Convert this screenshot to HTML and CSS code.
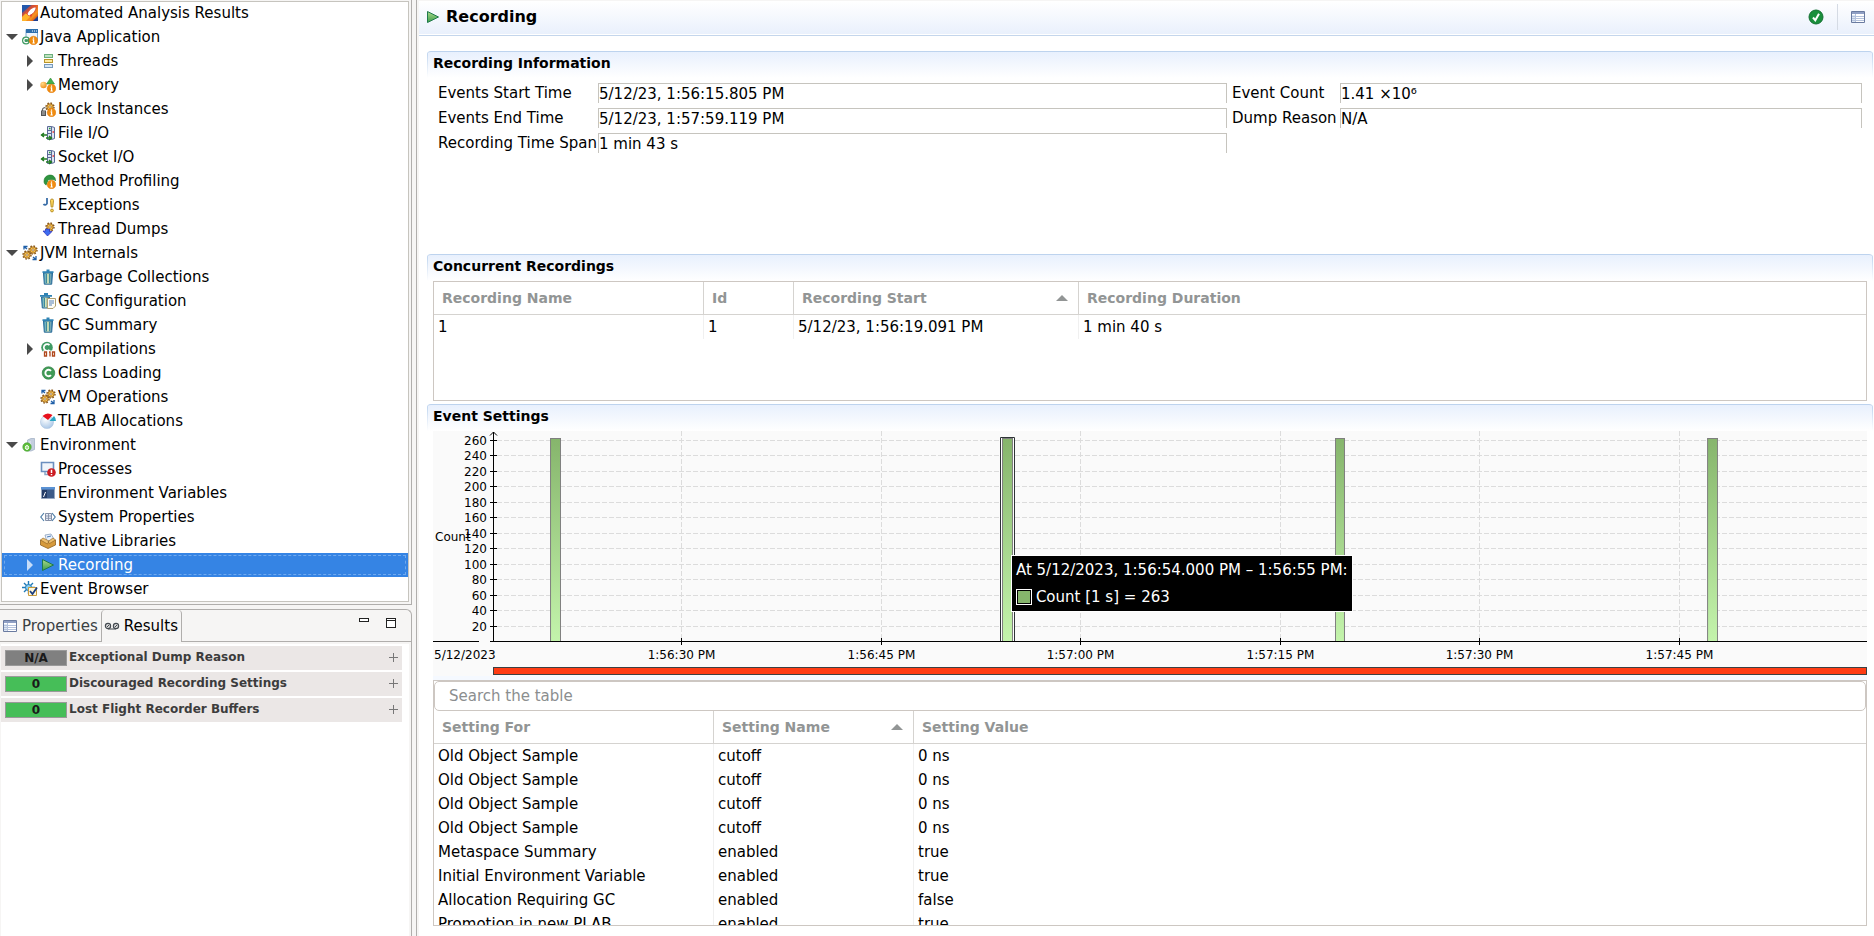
FILE: index.html
```html
<!DOCTYPE html>
<html lang="en">
<head>
<meta charset="utf-8">
<title>Recording</title>
<link rel="stylesheet" href="styles.css">
</head>
<body>
<svg class="sprite" aria-hidden="true">
  <defs>
    <linearGradient id="g-rocket" x1="0" y1="0" x2="1" y2="1"><stop offset="0" stop-color="#1f4fa8"/><stop offset=".4" stop-color="#e0502e"/><stop offset=".7" stop-color="#f7941e"/><stop offset="1" stop-color="#b3201c"/></linearGradient>
    <linearGradient id="g-can" x1="0" x2="1" y1="0" y2="0"><stop offset="0" stop-color="#2f8fc0"/><stop offset=".5" stop-color="#d5e3b4"/><stop offset="1" stop-color="#2a78b0"/></linearGradient>
    <linearGradient id="g-play" x1="0" y1="0" x2="0" y2="1"><stop offset="0" stop-color="#a9d98a"/><stop offset="1" stop-color="#3f9e4b"/></linearGradient>
    <linearGradient id="g-bar" x1="0" y1="0" x2="0" y2="1"><stop offset="0" stop-color="#86b56c"/><stop offset="1" stop-color="#c4f4ac"/></linearGradient>
    <radialGradient id="g-ball" cx=".35" cy=".3" r=".8"><stop offset="0" stop-color="#ffd98a"/><stop offset="1" stop-color="#f08a10"/></radialGradient>
    <radialGradient id="g-pie" cx=".4" cy=".3" r=".8"><stop offset="0" stop-color="#ffffff"/><stop offset="1" stop-color="#9fc0e4"/></radialGradient>
  </defs>
  <symbol id="info" viewBox="0 0 16 16"><circle cx="11.5" cy="11.5" r="4.3" fill="#f08c10" stroke="#e07404" stroke-width=".5"/><path d="M11.5 8.600v1.200M10.600 10.900h1v3M10.400 14h2.400" stroke="#fff" stroke-width="1.200" fill="none"/></symbol>
  <symbol id="gear" viewBox="0 0 10 10"><circle cx="5" cy="5" r="4" fill="none" stroke="#8a5614" stroke-width="1.400" stroke-dasharray="1.600 1.540"/><circle cx="5" cy="5" r="3.200" fill="#fbc24a" stroke="#8a5614" stroke-width=".8"/><circle cx="5" cy="5" r="1.200" fill="#fff" stroke="#8a5614" stroke-width=".7"/></symbol>
  <symbol id="rocket" viewBox="0 0 16 16"><path fill="url(#g-rocket)" d="M0 0h16v16H0z"/><path d="M0 0h9L0 8z" fill="#2458ac"/><path d="M0 12l5-5 4 4-5 5H0z" fill="#ffb52a"/><path d="M14 2C10 2 7 5 5 9l2 2c4-2 7-5 7-9z" fill="#fff" stroke="#c43" stroke-width=".7"/><path d="M6 7L3 8l2 1zM8 10l1 3 1-4z" fill="#e3352b"/><path d="M11 16h5v-5z" fill="#1d3f92"/></symbol>
  <symbol id="javaapp" viewBox="0 0 16 16"><path d="M4 .5h11.500v11H4z" fill="#eef6fd" stroke="#7fa8cc"/><path d="M4 0h12v4H4z" fill="#2d6fad"/><path d="M10 2h1M12 2h1M14 2h1" stroke="#fff"/><circle cx="4" cy="11.500" r="4" fill="#3f9a63"/><path d="M5.800 10.200a2.200 2.200 0 1 0 0 2.600" stroke="#fff" stroke-width="1.300" fill="none"/><use href="#info" width="16" height="16"/></symbol>
  <symbol id="threads" viewBox="0 0 16 16"><rect x="4.500" y="1.500" width="8" height="3" fill="#bfe3c0" stroke="#6cae7c"/><rect x="4.500" y="6.500" width="8" height="3" fill="#ffe9a0" stroke="#b8952c"/><rect x="4.500" y="11.500" width="8" height="3" fill="#d4e6f8" stroke="#7799bb"/></symbol>
  <symbol id="memory" viewBox="0 0 16 16"><circle cx="3.500" cy="8" r="3.200" fill="url(#g-ball)"/><path d="M10.500 1l4 6h-8z" fill="#45b04c" stroke="#2e8c38" stroke-width=".6"/><use href="#info" width="16" height="16"/></symbol>
  <symbol id="lock" viewBox="0 0 16 16"><use href="#gear" x="5" y="1" width="10" height="10"/><path d="M2.500 10V8.500a2 2 0 0 1 3-1.500" fill="none" stroke="#666" stroke-width="1.200"/><path d="M1 9.500h5V15H1z" fill="#555"/><path d="M2 11h3M2 13h3" stroke="#ddd" stroke-width=".8"/><use href="#info" width="16" height="16"/></symbol>
  <symbol id="io" viewBox="0 0 16 16"><path d="M7.500 1.500h4l3 1v11l-3 1h-4z" fill="#dfe5f3" stroke="#5a6a96"/><path d="M11.500 1.500v13M8 5.500h3.500M8 8.500h3.500" stroke="#5a6a96"/><path d="M9 3.500h1.500" stroke="#2a9a3c" stroke-width="1.400"/><path d="M12.500 7h1.500" stroke="#e33" stroke-width="1.400"/><path d="M1 10h6M4 8l-2.500 2L4 12M6 13h5M9 11l2.500 2L9 15" fill="none" stroke="#1f7a1f" stroke-width="1.400"/></symbol>
  <symbol id="method" viewBox="0 0 16 16"><path d="M4 8.500C4 0 16 0 15.500 8l-1.500-1.500H9L6.500 12C5 12 4 10 4 8.500z" fill="#2f9440" stroke="#1c7a2c" stroke-width=".6"/><path d="M6.500 12l2-5h3l-3 5z" fill="#cfeacf"/><use href="#info" width="16" height="16"/></symbol>
  <symbol id="exception" viewBox="0 0 16 16"><path d="M7 1v5.500a2 2 0 0 1-3.500 .5" fill="none" stroke="#3a6ea8" stroke-width="1.800"/><path d="M10.500 3.500a1.500 1.500 0 0 1 3 0l-.7 6.500h-1.600z" fill="#ffd85c" stroke="#b8902a"/><circle cx="12" cy="13.500" r="1.400" fill="#ffd85c" stroke="#b8902a"/></symbol>
  <symbol id="dump" viewBox="0 0 16 16"><use href="#gear" x="5" y="1" width="10" height="10"/><path d="M5.500 8v2H3l4.500 5L12 10.500H9.500V8z" fill="#3c6cf0" stroke="#2a2ab8" stroke-width=".7"/></symbol>
  <symbol id="gears" viewBox="0 0 16 16"><use href="#gear" x="6" y="0" width="10" height="10"/><use href="#gear" x="0" y="5" width="10" height="10"/><path d="M2 4.500V1.500h3.500M2.500 2L5 4M14 11v3.500h-3.500M13.500 14L11 12" fill="none" stroke="#1f5fa8" stroke-width="1.300"/></symbol>
  <symbol id="trash" viewBox="0 0 16 16"><path d="M3.500 4h9l-.8 11.200H4.300z" fill="url(#g-can)" stroke="#2a6c98"/><path d="M6.500 5v9M9.500 5v9" stroke="#3d8a9c"/><path d="M2.500 3.200h11M6.500 1.500h3" stroke="#2f83b4" stroke-width="1.800"/></symbol>
  <symbol id="gcconf" viewBox="0 0 16 16"><path d="M1.500 4h8v11H2.300z" fill="url(#g-can)" stroke="#2a6c98"/><path d="M4.500 5v9" stroke="#3d8a9c"/><path d="M0 2.800h12M4 1h4" stroke="#2f83b4" stroke-width="1.800"/><path d="M7.500 5.500h8V13l-2.500 2.500H7.500z" fill="#fffdf4" stroke="#b0a070"/><path d="M9 8h5M9 10h5M9 12h3" stroke="#5580b8"/></symbol>
  <symbol id="compile" viewBox="0 0 16 16"><circle cx="7" cy="6.500" r="5.800" fill="#3f9a63"/><path d="M9.500 4.200a3.300 3.300 0 1 0 0 4.600" stroke="#fff" stroke-width="1.700" fill="none"/><path d="M3 9.500h13V16H3z" fill="#fff"/><path d="M4.500 11h2v4h-2zM12.500 11h2v4h-2zM9 11h1v4.500" fill="none" stroke="#b0481c" stroke-width="1.300"/></symbol>
  <symbol id="class" viewBox="0 0 16 16"><circle cx="8.500" cy="8" r="6.300" fill="#3f9a55" stroke="#2a7a40" stroke-width=".6"/><path d="M11 5.900a3.200 3.200 0 1 0 0 4.200" stroke="#fff" stroke-width="1.900" fill="none"/></symbol>
  <symbol id="pie" viewBox="0 0 16 16"><circle cx="7" cy="9" r="6.600" fill="url(#g-pie)" stroke="#a8c0dc" stroke-width=".5"/><path d="M2.500 3Q7-1.500 12.500 2L8 7z" fill="#e8101c"/><path d="M9.500 8l4.500-5q2 2 2 5z" fill="#2ba6c4"/></symbol>
  <symbol id="env" viewBox="0 0 16 16"><path d="M5.500 3L9 1.500h3.500v11L9 14H5.500z" fill="#c3cede" stroke="#9eacc2" stroke-width=".7"/><path d="M6.500 5H9M6.500 7H9" stroke="#e9eef5"/><circle cx="5" cy="10" r="4.200" fill="#5fbf3c" stroke="#3c9a28" stroke-width=".6"/><ellipse cx="5" cy="10.500" rx="1.600" ry="2" fill="#9be07c" stroke="#fff"/></symbol>
  <symbol id="process" viewBox="0 0 16 16"><path d="M1.500 1.500h12v9h-12z" fill="#f0f5fb" stroke="#6b8fbf" stroke-width="1.600"/><path d="M5 11v2.500h5" fill="none" stroke="#8aa8c8" stroke-width="1.500"/><circle cx="11.500" cy="11.500" r="4.300" fill="#cc1c22"/><path d="M11.500 8.800v3.200M11.500 13v1.300" stroke="#fff" stroke-width="1.500"/></symbol>
  <symbol id="envvar" viewBox="0 0 16 16"><path d="M1.500 2.500h13v11h-13z" fill="#3d5b88" stroke="#98a8c0"/><path d="M1 2h14v2.500H1z" fill="#5a92d4"/><path d="M2 5h5v8H2z" fill="#243c66"/><path d="M5.500 7L3.500 12" stroke="#fff"/></symbol>
  <symbol id="sysprop" viewBox="0 0 16 16"><path d="M4 4L.8 8 4 12M12 4l3.200 4L12 12" fill="none" stroke="#4f7fa8" stroke-width="1.200"/><path d="M5.500 4.500h6v7h-6z" fill="#e8eef8" stroke="#8490a8"/><path d="M5.500 7h6M5.500 9.300h6M8.500 5v7" stroke="#8490a8" stroke-width=".9"/></symbol>
  <symbol id="library" viewBox="0 0 16 16"><path d="M5 2l6-1 3 5-7 3z" fill="#e9f1fb" stroke="#7b93b5" stroke-width=".7"/><path d="M7 4l4-1" stroke="#4a7ab8"/><path d="M.5 7L8 9.500 15.500 7v5L8 15.500.5 12z" fill="#d69a3c" stroke="#8f6220" stroke-width=".8"/><path d="M.5 7L3 5l6 3-1.500 3zM15.500 7L13 5 8 8.500l1.500 2z" fill="#eec070" stroke="#8f6220" stroke-width=".6"/></symbol>
  <symbol id="play" viewBox="0 0 16 16"><path d="M2.500 2.500L13.500 8l-11 5.500z" fill="url(#g-play)" stroke="#1f7a4c"/></symbol>
  <symbol id="event" viewBox="0 0 16 16"><path d="M6.500 0v13M0 6.500h13M2 2l9 9M11 2l-9 9" stroke="#1f7ab8" stroke-width="1.400"/><circle cx="6.500" cy="6.500" r="3" fill="#8fd0f0" stroke="#1f7ab8"/><path d="M6.500 6.500h8v8h-8z" fill="#fff8dc" stroke="#c89a3c"/><path d="M8 10l2.500 3L15 6.500" fill="none" stroke="#1d3f80" stroke-width="1.800"/></symbol>
  <symbol id="sheet" viewBox="0 0 16 16"><path d="M1.500 2.500h13v11h-13z" fill="#fff" stroke="#6a7ba0"/><path d="M2 3h12v2H2z" fill="#8f9fc4"/><path d="M2 6h3v7H2z" fill="#dbe6f4"/><path d="M2 7.500h12M2 9.500h12M2 11.500h12M5.500 5v8" stroke="#b4c2dc"/></symbol>
  <symbol id="tape" viewBox="0 0 16 16"><circle cx="4" cy="8" r="2.600" fill="#ddd" stroke="#444a50" stroke-width="1.200"/><circle cx="12" cy="8" r="2.600" fill="#ddd" stroke="#444a50" stroke-width="1.200"/><path d="M3 9l2-2M11 9l2-2M4 11h8" stroke="#444a50"/></symbol>
  <symbol id="check" viewBox="0 0 16 16"><circle cx="8" cy="8" r="7" fill="#1a8f3c" stroke="#147032" stroke-width="1"/><path d="M5 8.500l2.300 2.800L11 4.800" fill="none" stroke="#fff" stroke-width="2"/></symbol>
</svg>

<div class="app">
  <aside class="side">
    <nav class="pane outline" aria-label="Outline">
      <ul class="tree">
        <li><div class="row"><span class="twist"></span><svg class="icon"><use href="#rocket"/></svg>Automated Analysis Results</div></li>
        <li><div class="row"><button class="twist open" aria-label="Collapse"></button><svg class="icon"><use href="#javaapp"/></svg>Java Application</div>
          <ul>
            <li><div class="row"><button class="twist shut" aria-label="Expand"></button><svg class="icon"><use href="#threads"/></svg>Threads</div></li>
            <li><div class="row"><button class="twist shut" aria-label="Expand"></button><svg class="icon"><use href="#memory"/></svg>Memory</div></li>
            <li><div class="row"><span class="twist"></span><svg class="icon"><use href="#lock"/></svg>Lock Instances</div></li>
            <li><div class="row"><span class="twist"></span><svg class="icon"><use href="#io"/></svg>File I/O</div></li>
            <li><div class="row"><span class="twist"></span><svg class="icon"><use href="#io"/></svg>Socket I/O</div></li>
            <li><div class="row"><span class="twist"></span><svg class="icon"><use href="#method"/></svg>Method Profiling</div></li>
            <li><div class="row"><span class="twist"></span><svg class="icon"><use href="#exception"/></svg>Exceptions</div></li>
            <li><div class="row"><span class="twist"></span><svg class="icon"><use href="#dump"/></svg>Thread Dumps</div></li>
          </ul>
        </li>
        <li><div class="row"><button class="twist open" aria-label="Collapse"></button><svg class="icon"><use href="#gears"/></svg>JVM Internals</div>
          <ul>
            <li><div class="row"><span class="twist"></span><svg class="icon"><use href="#trash"/></svg>Garbage Collections</div></li>
            <li><div class="row"><span class="twist"></span><svg class="icon"><use href="#gcconf"/></svg>GC Configuration</div></li>
            <li><div class="row"><span class="twist"></span><svg class="icon"><use href="#trash"/></svg>GC Summary</div></li>
            <li><div class="row"><button class="twist shut" aria-label="Expand"></button><svg class="icon"><use href="#compile"/></svg>Compilations</div></li>
            <li><div class="row"><span class="twist"></span><svg class="icon"><use href="#class"/></svg>Class Loading</div></li>
            <li><div class="row"><span class="twist"></span><svg class="icon"><use href="#gears"/></svg>VM Operations</div></li>
            <li><div class="row"><span class="twist"></span><svg class="icon"><use href="#pie"/></svg>TLAB Allocations</div></li>
          </ul>
        </li>
        <li><div class="row"><button class="twist open" aria-label="Collapse"></button><svg class="icon"><use href="#env"/></svg>Environment</div>
          <ul>
            <li><div class="row"><span class="twist"></span><svg class="icon"><use href="#process"/></svg>Processes</div></li>
            <li><div class="row"><span class="twist"></span><svg class="icon"><use href="#envvar"/></svg>Environment Variables</div></li>
            <li><div class="row"><span class="twist"></span><svg class="icon"><use href="#sysprop"/></svg>System Properties</div></li>
            <li><div class="row"><span class="twist"></span><svg class="icon"><use href="#library"/></svg>Native Libraries</div></li>
            <li><div class="row selected"><button class="twist shut" aria-label="Expand"></button><svg class="icon"><use href="#play"/></svg>Recording</div></li>
          </ul>
        </li>
        <li><div class="row"><span class="twist"></span><svg class="icon"><use href="#event"/></svg>Event Browser</div></li>
      </ul>
    </nav>

    <section class="pane views">
      <div class="tabs">
        <button class="tab"><svg class="icon"><use href="#sheet"/></svg>Properties</button>
        <button class="tab active"><svg class="icon"><use href="#tape"/></svg>Results</button>
        <div class="tools">
          <button class="tool minimize" aria-label="Minimize"></button>
          <button class="tool maximize" aria-label="Maximize"></button>
        </div>
      </div>
      <div class="results">
        <div class="result"><span class="badge na">N/A</span><span class="rule">Exceptional Dump Reason</span><button class="more" aria-label="Expand result"></button></div>
        <div class="result"><span class="badge">0</span><span class="rule">Discouraged Recording Settings</span><button class="more" aria-label="Expand result"></button></div>
        <div class="result"><span class="badge">0</span><span class="rule">Lost Flight Recorder Buffers</span><button class="more" aria-label="Expand result"></button></div>
      </div>
    </section>
  </aside>

  <main class="page">
    <header class="titlebar">
      <svg class="icon"><use href="#play"/></svg>
      <h1>Recording</h1>
      <div class="actions">
        <button class="action" aria-label="Results"><svg class="icon"><use href="#check"/></svg></button>
        <button class="action divided" aria-label="Page properties"><svg class="icon"><use href="#sheet"/></svg></button>
      </div>
    </header>

    <div class="body">
      <section class="info">
        <h2>Recording Information</h2>
        <div class="fields">
          <label for="start">Events Start Time</label><input id="start" readonly value="5/12/23, 1:56:15.805 PM">
          <label for="count">Event Count</label><input id="count" readonly value="1.41 ×10⁶">
          <label for="end">Events End Time</label><input id="end" readonly value="5/12/23, 1:57:59.119 PM">
          <label for="reason">Dump Reason</label><input id="reason" readonly value="N/A">
          <label for="span">Recording Time Span</label><input id="span" readonly value="1 min 43 s">
        </div>
      </section>

      <section class="concurrent">
        <h2>Concurrent Recordings</h2>
        <div class="box">
          <table>
            <colgroup><col class="w-name"><col class="w-id"><col class="w-start"><col></colgroup>
            <thead><tr><th>Recording Name</th><th>Id</th><th class="sorted">Recording Start</th><th>Recording Duration</th></tr></thead>
            <tbody><tr><td>1</td><td>1</td><td>5/12/23, 1:56:19.091 PM</td><td>1 min 40 s</td></tr></tbody>
          </table>
        </div>
      </section>

      <section class="settings">
        <h2>Event Settings</h2>
        <div class="chart">
          <svg class="yaxis" role="img" aria-label="Count axis">
            <path class="ink" d="M0 210.500h46M57 210.500h3"/>
            <g class="labels" text-anchor="end">
              <text x="54" y="14">260</text><text x="54" y="29">240</text><text x="54" y="45">220</text><text x="54" y="60">200</text>
              <text x="54" y="76">180</text><text x="54" y="91">160</text><text x="54" y="107">140</text><text x="54" y="122">120</text>
              <text x="54" y="138">100</text><text x="54" y="153">80</text><text x="54" y="169">60</text><text x="54" y="184">40</text><text x="54" y="200">20</text>
            </g>
            <text class="labels" x="2" y="110">Count</text>
            <path class="ink" d="M57 9.500h3M57 24.500h3M57 40.500h3M57 55.500h3M57 71.500h3M57 86.500h3M57 102.500h3M57 117.500h3M57 133.500h3M57 148.500h3M57 164.500h3M57 179.500h3M57 195.500h3"/>
            <text class="labels" x="1" y="228">5/12/2023</text>
          </svg>
          <svg class="plot" role="img" aria-label="Event count over time">
            <g class="grid">
              <line x1="4" x2="100%" y1="9.500" y2="9.500"/><line x1="4" x2="100%" y1="24.500" y2="24.500"/><line x1="4" x2="100%" y1="40.500" y2="40.500"/>
              <line x1="4" x2="100%" y1="55.500" y2="55.500"/><line x1="4" x2="100%" y1="71.500" y2="71.500"/><line x1="4" x2="100%" y1="86.500" y2="86.500"/>
              <line x1="4" x2="100%" y1="102.500" y2="102.500"/><line x1="4" x2="100%" y1="117.500" y2="117.500"/><line x1="4" x2="100%" y1="133.500" y2="133.500"/>
              <line x1="4" x2="100%" y1="148.500" y2="148.500"/><line x1="4" x2="100%" y1="164.500" y2="164.500"/><line x1="4" x2="100%" y1="179.500" y2="179.500"/>
              <line x1="4" x2="100%" y1="195.500" y2="195.500"/>
              <line x1="13.720%" x2="13.720%" y1="0" y2="210"/><line x1="28.270%" x2="28.270%" y1="0" y2="210"/><line x1="42.760%" x2="42.760%" y1="0" y2="210"/>
              <line x1="57.310%" x2="57.310%" y1="0" y2="210"/><line x1="71.800%" x2="71.800%" y1="0" y2="210"/><line x1="86.350%" x2="86.350%" y1="0" y2="210"/>
            </g>
            <g class="bars">
              <svg x="4.150%" y="7" width="11" height="204"><rect x=".5" y=".5" width="10" height="204"/></svg>
              <svg x="36.900%" y="6" width="15" height="205"><path class="halo" d="M.5 205V.5h14V205"/><rect x="2.500" y="1.500" width="10" height="204"/></svg>
              <svg x="61.280%" y="7" width="10" height="204"><rect x=".5" y=".5" width="9" height="204"/></svg>
              <svg x="88.360%" y="7" width="11" height="204"><rect x=".5" y=".5" width="10" height="204"/></svg>
            </g>
            <line class="ink" x1="0" x2="100%" y1="210.500" y2="210.500"/>
            <path class="ink" d="M.5 1v209M0 9.500h4M0 24.500h4M0 40.500h4M0 55.500h4M0 71.500h4M0 86.500h4M0 102.500h4M0 117.500h4M0 133.500h4M0 148.500h4M0 164.500h4M0 179.500h4M0 195.500h4"/>
            <path class="tip" d="M-3 4.500L.5 1 4 4.500"/>
            <g class="ink">
              <line x1="13.720%" x2="13.720%" y1="207" y2="214"/><line x1="28.270%" x2="28.270%" y1="207" y2="214"/><line x1="42.760%" x2="42.760%" y1="207" y2="214"/>
              <line x1="57.310%" x2="57.310%" y1="207" y2="214"/><line x1="71.800%" x2="71.800%" y1="207" y2="214"/><line x1="86.350%" x2="86.350%" y1="207" y2="214"/>
            </g>
            <g class="labels" text-anchor="middle">
              <text x="13.720%" y="228">1:56:30 PM</text><text x="28.270%" y="228">1:56:45 PM</text><text x="42.760%" y="228">1:57:00 PM</text>
              <text x="57.310%" y="228">1:57:15 PM</text><text x="71.800%" y="228">1:57:30 PM</text><text x="86.350%" y="228">1:57:45 PM</text>
            </g>
          </svg>
          <div class="range"></div>
          <div class="tooltip" role="tooltip">
            <div>At 5/12/2023, 1:56:54.000 PM – 1:56:55 PM:</div>
            <div class="series"><span class="swatch"></span>Count [1 s] = 263</div>
          </div>
        </div>
        <div class="box grow">
          <input class="search" type="text" placeholder="Search the table" aria-label="Search the table">
          <table>
            <colgroup><col class="w-for"><col class="w-setting"><col></colgroup>
            <thead><tr><th>Setting For</th><th class="sorted">Setting Name</th><th>Setting Value</th></tr></thead>
            <tbody>
              <tr><td>Old Object Sample</td><td>cutoff</td><td>0 ns</td></tr>
              <tr><td>Old Object Sample</td><td>cutoff</td><td>0 ns</td></tr>
              <tr><td>Old Object Sample</td><td>cutoff</td><td>0 ns</td></tr>
              <tr><td>Old Object Sample</td><td>cutoff</td><td>0 ns</td></tr>
              <tr><td>Metaspace Summary</td><td>enabled</td><td>true</td></tr>
              <tr><td>Initial Environment Variable</td><td>enabled</td><td>true</td></tr>
              <tr><td>Allocation Requiring GC</td><td>enabled</td><td>false</td></tr>
              <tr><td>Promotion in new PLAB</td><td>enabled</td><td>true</td></tr>
            </tbody>
          </table>
        </div>
      </section>
    </div>
  </main>
</div>
</body>
</html>
```
FILE: styles.css
```css
* { box-sizing: border-box; }

body {
  margin: 0;
  font: 15px/24px "DejaVu Sans", sans-serif;
  color: #000;
  background: #f6f5f4;
}

button, input { font: inherit; color: inherit; margin: 0; }
button { border: 0; padding: 0; background: none; }
ul { list-style: none; margin: 0; padding: 0; }
h1, h2 { margin: 0; }

.sprite { position: absolute; width: 0; height: 0; }
.icon { width: 16px; height: 16px; flex: none; }

.app { display: flex; height: 100vh; overflow: hidden; }

/* Left column */
.side { flex: none; width: 412px; display: flex; flex-direction: column; gap: 4px; }
.pane { border-right: 1px solid #b0aeac; }
.outline { flex: none; padding: 1px 2px 2px 1px; border-bottom: 1px solid #b0aeac; }

.tree { padding: 0 1px 1px; background: #fff; box-shadow: inset 0 0 0 1px #c6c4be; }
.row { display: flex; align-items: center; gap: 2px; height: 24px; padding-left: 2px; white-space: nowrap; }
.tree ul .row { padding-left: 20px; }
.row.selected { background: #3584e4; color: #fff; outline: 1px dashed #6fa9ee; outline-offset: -3px; }

.twist { width: 16px; height: 16px; flex: none; display: flex; align-items: center; justify-content: center; }
.twist.open::before { content: ""; border: 6px solid transparent; border-top-color: #4a4a4a; border-bottom: 0; }
.twist.shut::before { content: ""; border: 6px solid transparent; border-left-color: #4a4a4a; border-right: 0; }
.selected .twist.shut::before { border-left-color: #c6dcf8; }

.views { flex: 1; display: flex; flex-direction: column; border-top: 1px solid #b0aeac; border-top-right-radius: 6px; }
.tabs { display: flex; height: 32px; border-bottom: 1px solid #b0aeac; }
.tab { display: flex; align-items: center; gap: 4px; height: 32px; padding: 0 3px 0 2px; color: #3a4043; }
.tab.active { color: #000; background: #f6f5f4; border: solid #b0aeac; border-width: 0 1px; border-top-right-radius: 4px; border-top-left-radius: 4px; }
.tools { flex: 1; display: flex; justify-content: flex-end; gap: 17px; padding: 8px 15px 0 0; }
.tool { width: 10px; border: 1px solid #222; background: #fff; }
.tool.minimize { height: 4px; }
.tool.maximize { height: 10px; border-top-width: 3px; border-top-style: double; }

.results { flex: 1; display: flex; flex-direction: column; gap: 2px; margin: 2px 2px 0 1px; padding: 2px 7px 0 0; background: #fff; }
.result { display: flex; align-items: center; gap: 2px; height: 24px; padding: 0 4px 1px; background: #ebe7e6; font-size: 12px; font-weight: bold; color: #3c3c3c; }
.badge { width: 62px; height: 16px; border: 1px solid #9a9a9a; background: #46be58; color: #1a1a1a; line-height: 14px; text-align: center; }
.badge.na { background: #808080; }
.rule { flex: 1; line-height: 20px; padding-bottom: 2px; }
.more { width: 9px; height: 9px; background: linear-gradient(#777, #777) center / 9px 1px no-repeat, linear-gradient(#777, #777) center / 1px 9px no-repeat; }

/* Page */
.page { flex: 1; min-width: 0; display: flex; flex-direction: column; margin-left: 4px; border-left: 1px solid #b0aeac; padding: 1px 0 0 2px; background: #f6f5f4; }
.titlebar { flex: none; display: flex; align-items: center; gap: 2px; height: 35px; padding: 0 8px 3px 6px; background: linear-gradient(#fff, #e9f0fc); border-bottom: 1px solid #c4d6ec; box-shadow: inset 0 -1px #fff; }
.titlebar h1 { font-size: 16px; padding-left: 3px; }
.actions { display: flex; align-items: center; gap: 13px; margin-left: auto; }
.action { display: flex; align-items: center; height: 26px; }
.action.divided { border-left: 1px solid #d5dbe4; padding-left: 12px; }

.body { flex: 1; min-height: 0; display: flex; flex-direction: column; padding: 15px 1px 10px 8px; background: #fff; }

h2 {
  height: 27px;
  padding: 0 6px;
  border-top: 1px solid #bdd3ee;
  border-radius: 4px 4px 0 0;
  font-size: 14px;
  line-height: 22px;
  background:
    linear-gradient(#bdd3ee, #fff) left / 1px 100% no-repeat,
    linear-gradient(#bdd3ee, #fff) right / 1px 100% no-repeat,
    linear-gradient(#e8f0fd, #fff);
}

.info { min-height: 203px; }
.fields { display: grid; grid-template-columns: 155px 629fr 103px 522fr; gap: 5px; padding: 5px 11px 0; }
.fields label { line-height: 20px; height: 20px; white-space: nowrap; }
.fields input { min-width: 0; height: 20px; padding: 0; border: 1px solid #c6c4be; border-bottom: 0; background: #fff; }

.box { margin: 0 6px; border: 1px solid #cdc7c2; background: #fff; overflow: hidden; }
.concurrent { flex: none; margin-bottom: 3px; }
.concurrent .box { height: 120px; }

table { width: 100%; table-layout: fixed; border-collapse: separate; border-spacing: 0; }
th { height: 33px; padding: 0 8px; border: solid #d5d3d0; border-width: 0 1px 1px 0; font-size: 14px; text-align: left; color: #929595; }
td { height: 24px; padding: 0 4px; border-right: 1px solid #f0f0f0; white-space: nowrap; }
th:last-child, td:last-child { border-right: 0; }
.sorted::after { content: ""; float: right; margin: 9px 2px 0 0; border: 6px solid transparent; border-bottom-color: #929595; border-top: 0; }
.w-name { width: 270px; }
.w-id { width: 90px; }
.w-start { width: 285px; }
.w-for { width: 280px; }
.w-setting { width: 200px; }

.settings { flex: 1; min-height: 0; display: flex; flex-direction: column; }
.settings h2 { flex: none; }

.chart { position: relative; flex: none; display: grid; grid-template-columns: 60px 1fr; margin: 0 6px; padding-bottom: 1px; background: #fafafa; border-bottom: 4px solid #f5f9ff; }
.yaxis, .plot { width: 100%; height: 236px; overflow: visible; }
.labels { font-size: 12px; }
.ink { stroke: #000; fill: none; shape-rendering: crispEdges; }
.tip { stroke: #000; fill: none; stroke-width: 1; }
.grid { stroke: #dcdcdc; stroke-dasharray: 5 2; shape-rendering: crispEdges; }
.bars rect { fill: url(#g-bar); stroke: #7f7f7f; }
.halo { fill: #fff; stroke: #2e3436; }
.range { grid-column: 2; height: 8px; border: 1px solid #3c4043; background: #ff3c14; }

.tooltip { position: absolute; left: 40.3%; top: 124px; display: flex; flex-direction: column; gap: 3px; padding: 2px 4px; border: 1px solid #fff; background: #000; color: #fff; white-space: nowrap; }
.series { display: flex; align-items: center; gap: 4px; }
.swatch { width: 16px; height: 16px; border: 1px solid #fff; background: #86b56c; box-shadow: inset 0 0 0 1px #000; }

.grow { flex: 1; min-height: 0; }
.search { display: block; width: 100%; height: 30px; padding: 0 14px; border: 1px solid #cdc7c2; border-radius: 5px; background: #fff; }
.search::placeholder { color: #8b8e8f; opacity: 1; }
```
